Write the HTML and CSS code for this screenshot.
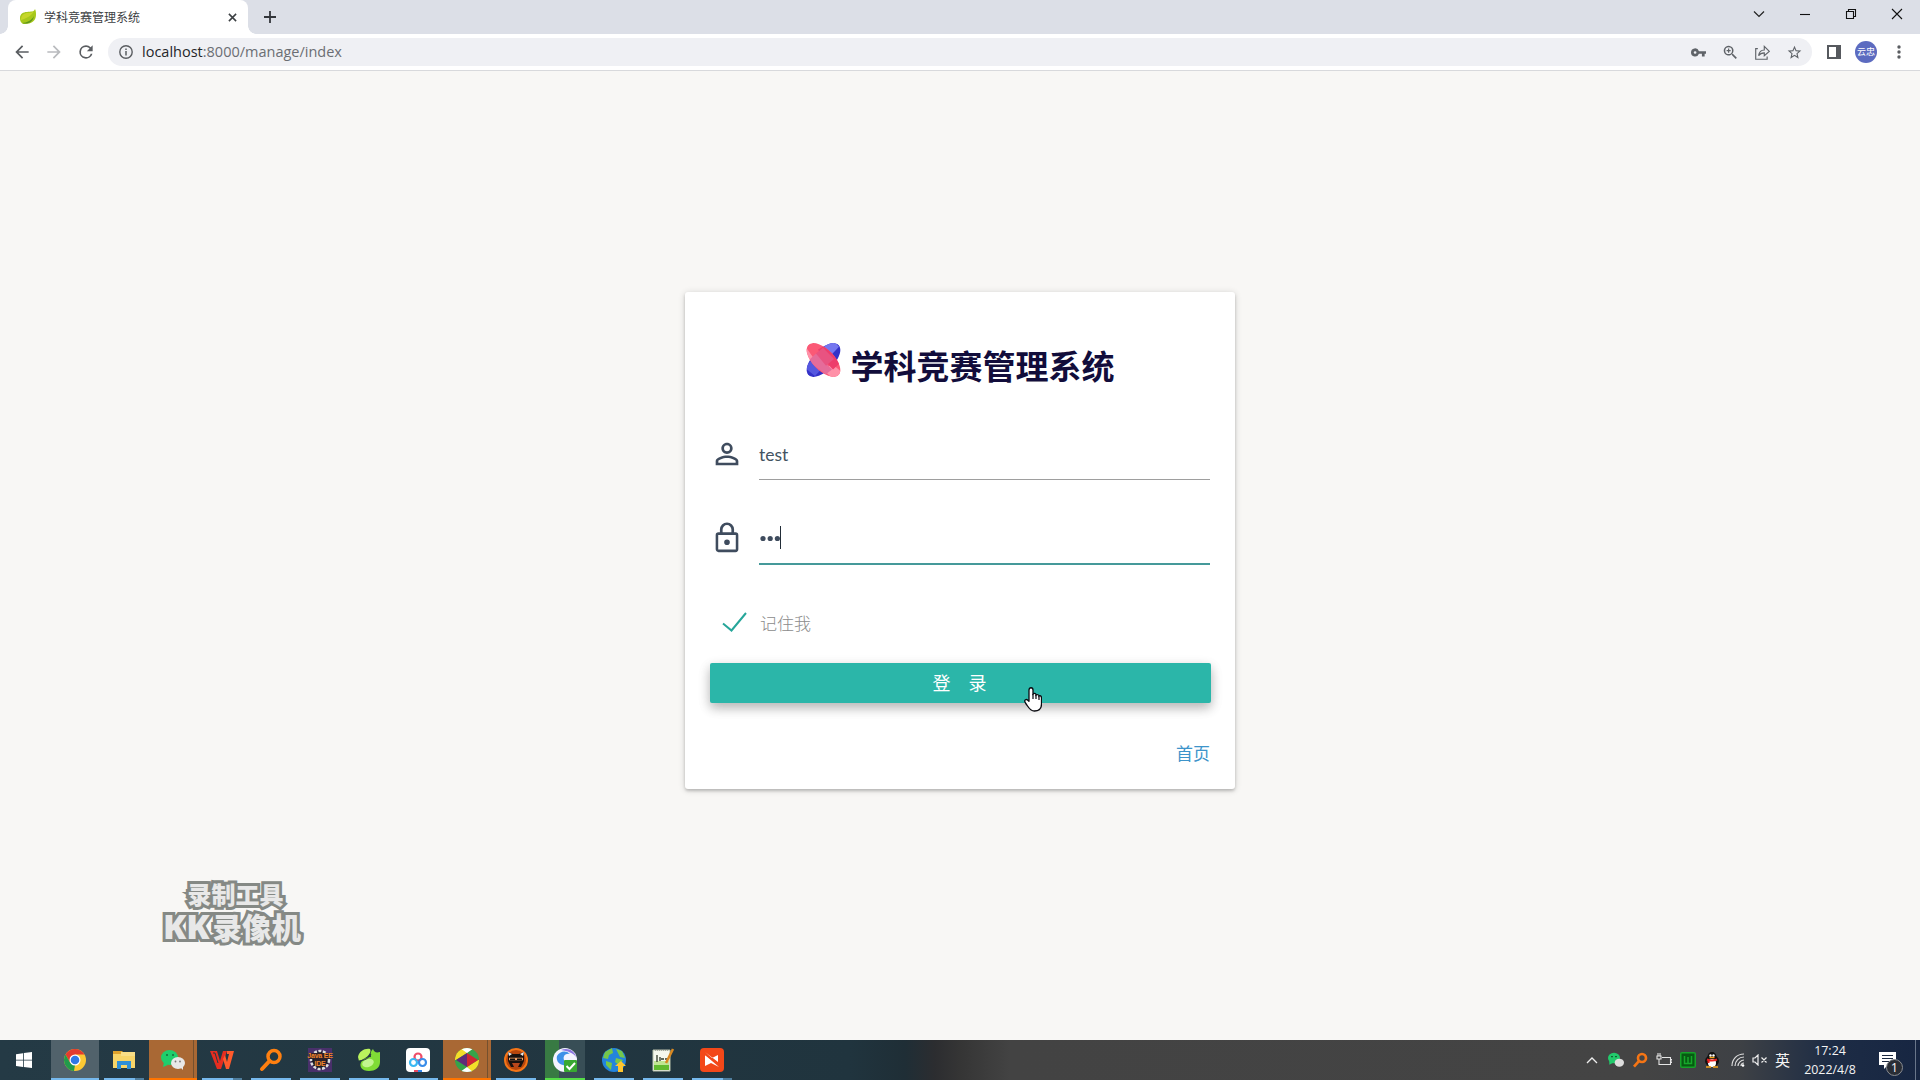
FILE: index.html
```html
<!DOCTYPE html>
<html lang="zh-CN">
<head>
<meta charset="utf-8">
<title>学科竞赛管理系统</title>
<link rel="stylesheet" href="styles.css">
</head>
<body>
<div class="desktop">
  <header class="tabstrip">
    <div class="tab">
      <svg class="favicon" viewBox="0 0 16 16"><path fill="#a7c81b" d="M15 0c-1 3-4 2.500-8 3C3 3 0 5 0 9c0 4 2 6 5 6 6 0 11-3 11-9 0-2 0-4-1-6z"/><path fill="#c6d62a" d="M14 2C12 6 8 9 1 11 1 6 4 4 8 4c3 0 5-1 6-2z"/><path fill="#5d951c" d="M2 14c5 0 10-3 12-7-1 6-6 9-12 7z"/></svg>
      <span class="tab-title">学科竞赛管理系统</span>
      <svg class="tab-close" viewBox="0 0 10 10"><path d="M1 1l8 8M9 1L1 9" stroke="#3c4043" stroke-width="1.7"/></svg>
    </div>
    <svg class="newtab" viewBox="0 0 12 12"><path d="M6 0v12M0 6h12" stroke="#33363b" stroke-width="1.8"/></svg>
    <div class="window-controls">
      <svg viewBox="0 0 12 12"><path d="M1 3.5l5 5 5-5" fill="none" stroke="#222" stroke-width="1.2"/></svg>
      <svg viewBox="0 0 12 12"><path d="M1 6.5h10" stroke="#111" stroke-width="1.1"/></svg>
      <svg viewBox="0 0 12 12"><path d="M1.5 3.5h7v7h-7zM3.5 3.5v-2h7v7h-2" fill="none" stroke="#111" stroke-width="1.1"/></svg>
      <svg viewBox="0 0 12 12"><path d="M1 1l10 10M11 1L1 11" stroke="#111" stroke-width="1.1"/></svg>
    </div>
  </header>
  <nav class="toolbar">
    <svg class="nav-icon" viewBox="0 0 24 24"><path fill="#5a5d61" d="M20 11H7.83l5.59-5.59L12 4l-8 8 8 8 1.41-1.41L7.83 13H20v-2z"/></svg>
    <svg class="nav-icon" viewBox="0 0 24 24"><path fill="#b9bbbe" d="M12 4l-1.41 1.41L16.17 11H4v2h12.17l-5.58 5.59L12 20l8-8z"/></svg>
    <svg class="nav-icon" viewBox="0 0 24 24"><path fill="#5a5d61" d="M17.65 6.35A7.96 7.96 0 0 0 12 4a8 8 0 1 0 7.73 10h-2.08A6 6 0 1 1 12 6c1.66 0 3.14.69 4.22 1.78L13 11h7V4l-2.35 2.35z"/></svg>
    <div class="address">
      <svg class="info" viewBox="0 0 14 14"><circle cx="7" cy="7" r="6.2" fill="none" stroke="#5a5d61" stroke-width="1.4"/><path d="M7 6v4.5M7 3.5V5" stroke="#5a5d61" stroke-width="1.5"/></svg>
      <span class="url"><b>localhost</b>:8000/manage/index</span>
      <div class="address-actions">
        <svg viewBox="1 1 22 22"><path fill="#5f6368" d="M12.650 10A5.990 5.990 0 0 0 1 12a6 6 0 0 0 11.650 2H17v4h4v-4h2v-4H12.650zM7 14a2 2 0 1 1 0-4 2 2 0 0 1 0 4z"/></svg>
        <svg viewBox="2 2 20 20"><path fill="#5f6368" d="M15.5 14h-.79l-.28-.27A6.5 6.5 0 1 0 13.73 14.43l.27.28v.79l5 5L20.5 19l-5-5zm-6 0a4.5 4.5 0 1 1 0-9 4.5 4.5 0 0 1 0 9zM10.3 6.8H8.7v1.9H6.800v1.6h1.900v1.900h1.600v-1.900h1.900V8.700h-1.900z"/></svg>
        <svg viewBox="2 2 21 21"><path d="M6 7H3v15h16v-4M7 17c1-6 4-8 8-8V4l7 7-7 6v-4c-4 0-6 1-8 4z" fill="none" stroke="#5f6368" stroke-width="1.600"/></svg>
        <svg viewBox="1 1 22 22"><path fill="#5f6368" d="M22 9.240l-7.190-.62L12 2 9.190 8.630 2 9.240l5.460 4.730L5.820 21 12 17.270 18.180 21l-1.630-7.030L22 9.240zM12 15.400l-3.760 2.270 1-4.280-3.320-2.880 4.380-.38L12 6.100l1.710 4.040 4.380.38-3.320 2.880 1 4.280L12 15.400z"/></svg>
      </div>
    </div>
    <svg class="panel" viewBox="0 0 14 14"><path fill="#56595e" fill-rule="evenodd" d="M0 0h14v14H0zM2 2v10h7V2z"/></svg>
    <span class="avatar">云忠</span>
    <svg class="dots" viewBox="0 0 4 14"><g fill="#5a5d61"><circle cx="2" cy="2" r="1.700"/><circle cx="2" cy="7" r="1.700"/><circle cx="2" cy="12" r="1.700"/></g></svg>
  </nav>

  <main class="page">
    <form class="card">
      <h1 class="brand">
        <svg class="logo" viewBox="0 0 35 36" preserveAspectRatio="none">
          <defs>
            <clipPath id="blue"><ellipse cx="17.500" cy="18" rx="22" ry="11" transform="rotate(-48 17.500 18)"/></clipPath>
            <clipPath id="red"><ellipse cx="17.500" cy="18" rx="22" ry="11" transform="rotate(48 17.500 18)"/></clipPath>
            <clipPath id="box"><rect width="35" height="36" rx="7"/></clipPath>
          </defs>
          <g clip-path="url(#box)">
          <g clip-path="url(#blue)"><path fill="#3432c8" d="M-5-5h45v45H-5z"/><path fill="#7577ef" d="M18 4l9-7 6 7-9 10-6 3z"/><path fill="#5557df" d="M0 24l6-6 9 10-6 7-8-7z"/></g>
          <g clip-path="url(#red)"><path fill="#fb5976" d="M-5-5h45v45H-5z"/><path fill="#ff91a8" d="M-2 8L1 6l6 9-5 6zM18 29l8-7 10 9-8 8z"/><path fill="#e56c9a" d="M2 19L10 11l16 17-6 5z"/><path fill="#ed3e6b" d="M12 7L20 2l15 18-8 8-9-10z"/><path fill="#e85381" d="M10 11l7-6 11 12-8 7z"/></g>
          </g>
        </svg>
        <span>学科竞赛管理系统</span>
      </h1>
      <div class="field">
        <svg class="field-icon" viewBox="0 0 24 24"><path fill="#3f4c5e" d="M12 5.900a2.100 2.100 0 1 1 0 4.200 2.100 2.100 0 0 1 0-4.200m0 9c2.970 0 6.100 1.460 6.100 2.100v1.100H5.900V17c0-.64 3.130-2.100 6.100-2.100M12 4C9.790 4 8 5.790 8 8s1.790 4 4 4 4-1.790 4-4-1.790-4-4-4zm0 9c-2.670 0-8 1.340-8 4v3h16v-3c0-2.660-5.330-4-8-4z"/></svg>
        <div class="input">test</div>
      </div>
      <div class="field">
        <svg class="field-icon" viewBox="0 0 24 24"><path fill="#3f4c5e" d="M12 17a2 2 0 1 0 0-4 2 2 0 0 0 0 4zm6-9h-1V6A5 5 0 0 0 7 6v2H6a2 2 0 0 0-2 2v10c0 1.100.9 2 2 2h12a2 2 0 0 0 2-2V10a2 2 0 0 0-2-2zM8.900 6a3.100 3.100 0 0 1 6.200 0v2H8.900V6zM18.200 20.200H5.800V9.800h12.400v10.400z"/></svg>
        <div class="input focused"><svg class="password" viewBox="0 0 24 24"><g fill="#3f4c5e"><circle cx="4" cy="12.500" r="2.600"/><circle cx="11.200" cy="12.500" r="2.600"/><circle cx="18.400" cy="12.500" r="2.600"/></g><path d="M21.500 0v23" stroke="#222d38"/></svg></div>
      </div>
      <label class="remember">
        <svg viewBox="0 0 25 20"><path d="M1 11.500l8.500 7L24 1" fill="none" stroke="#26a69a" stroke-width="2"/></svg>
        <span>记住我</span>
      </label>
      <div class="login"><span>登</span><span>录</span>
        <svg class="cursor" viewBox="0 0 18 25"><path d="M5 14V3c0-3 4-3 4 0v4c1-1 3-1 3 1 1-1 3 0 3 1 1-1 2.500 0 2.500 2v6c0 5-3 7-7 7-5 0-6-4-9-8-2-3 1-5 3-2z" fill="#fff" stroke="#08080e" stroke-width="1.300"/><path d="M9 7v5M12 8v4M15 9v4" stroke="#08080e" stroke-width="1.200"/></svg>
      </div>
      <a class="home">首页</a>
    </form>
    <div class="watermark"><span class="wm-top">录制工具</span><span class="wm-bottom"><span class="wm-kk">KK</span>录像机</span></div>
  </main>

  <footer class="taskbar">
    <div class="start"><svg viewBox="0 0 16 16"><path fill="#fff" d="M0 2.200l7-1v6.500H0zM7.800 1.100L16 0v7.700H7.800zM0 8.500h7V15l-7-1zM7.800 8.500H16V16l-8.200-1.100z"/></svg></div>
    <div class="apps">
      <div class="app active"><svg viewBox="0 0 24 24"><circle cx="12" cy="12" r="11" fill="#fcc934"/><path fill="#e33b2e" d="M2.500 6.500A11 11 0 0 1 21.500 6.500H12v5.500l-4.800 2.800z"/><path fill="#229a4b" d="M2.500 6.500l4.700 8.300L12 17l-1 6A11 11 0 0 1 2.500 6.500z"/><circle cx="12" cy="12" r="5.500" fill="#fff"/><circle cx="12" cy="12" r="4.300" fill="#2f78e6"/></svg></div>
      <div class="app stacked"><svg viewBox="0 0 24 24"><path fill="#e0a32d" d="M1 3h9l2 2v3H1z"/><path fill="#f8d568" d="M1 6h22v14H1z"/><path fill="#f9de86" d="M9 4h14v4H9z"/><path fill="#2f8fd7" d="M5 13h14v8h-4v-4H9v4H5z"/></svg></div>
      <div class="app alert"><svg viewBox="0 0 24 24"><ellipse cx="8.500" cy="9.500" rx="8.500" ry="7.500" fill="#1fce6c"/><path fill="#1fce6c" d="M3 14l-1 5 5-2z"/><g fill="#176b3c"><circle cx="6" cy="7" r="1"/><circle cx="12" cy="7" r="1"/></g><ellipse cx="17" cy="15" rx="7" ry="6" fill="#e8e8e8"/><path fill="#e8e8e8" d="M19 19l3 3v-5z"/><g fill="#777"><circle cx="14.500" cy="13.500" r=".9"/><circle cx="19" cy="13.500" r=".9"/></g></svg></div>
      <div class="app stacked"><svg viewBox="0 0 24 24"><path fill="#e52d20" d="M0 3h7l3 10 3-10h4l-6 18H7z"/><path fill="#ff5a2c" d="M13 11l3 10h3l5-18h-7v3h2l-2 8-2-7z"/><path d="M3 5h2l3 10" fill="none" stroke="#263944"/></svg></div>
      <div class="app"><svg viewBox="0 0 24 24"><circle cx="15" cy="8.500" r="6" fill="none" stroke="#ff8010" stroke-width="3.500"/><path d="M10.500 13L3 21" stroke="#ff8010" stroke-width="4" stroke-linecap="round"/></svg></div>
      <div class="app java-app">
        <svg viewBox="0 0 24 24"><path fill="#49306b" d="M0 0h24v24H0z"/><circle cx="12" cy="12" r="9" fill="#171925" stroke="#ddd" stroke-width="2.500" stroke-dasharray="3 1.500"/><path fill="#2c2028" d="M1 5h22v6H1zM6 11h12v7H6z"/></svg>
        <div class="java"><span>Java EE</span><span>IDE</span></div>
      </div>
      <div class="app"><svg viewBox="0 0 24 24"><path fill="#baf45d" d="M1 9C2 3 8 0 13 1c2 3-2 9-11 12z"/><path fill="#80dc36" d="M14 9c-1-4 0-6 2-8 1 3 3 4 7 3v10c0 6-5 9-11 9-7 0-11-5-7-10 3-3 6-4 9-4z"/><ellipse cx="11" cy="15" rx="6" ry="4" fill="#d8fcae" opacity=".75" transform="rotate(-20 11 15)"/><path d="M2 13c6-1 9-2 12-7" fill="none" stroke="#263944"/></svg></div>
      <div class="app"><svg viewBox="0 0 24 24"><rect width="24" height="24" rx="4" fill="#fff"/><g fill="none" stroke-width="2.200"><circle cx="12" cy="9" r="3.500" stroke="#ee4d68"/><circle cx="7.500" cy="14.500" r="3.500" stroke="#38b8f3"/><circle cx="16.500" cy="14.500" r="3.500" stroke="#388ce9"/></g><path fill="#e84a62" d="M8 22h4v2H8z"/><path fill="#3184e8" d="M12 22h4v2h-4z"/></svg></div>
      <div class="app alert"><svg viewBox="0 0 24 24"><clipPath id="wheel"><circle cx="12" cy="12" r="12"/></clipPath><g clip-path="url(#wheel)"><path fill="#35a34a" d="M0 0h24v24H0z"/><path fill="#f4dd29" d="M0 0h9l3 5L1 12H0zM12 19l11-7h1v8l-7 4z"/><path fill="#fff" d="M5 0h14l-7 5zM5 24l7-5 6 5z"/><path fill="#5f2c79" d="M1 12l11-7v14z"/><path fill="#cf2634" d="M12 5l11 7-11 7z"/></g></svg></div>
      <div class="app"><svg viewBox="0 0 24 24"><circle cx="12" cy="12" r="11" fill="#b6460d" stroke="#f57517" stroke-width="2"/><path fill="#17110f" d="M4 4l5 2h6l5-2v9l-3 6H7l-3-6z"/><path d="M5 11h14" stroke="#f3a267" stroke-width="2.500"/><path fill="#111" d="M6 10.500h5v1.500H6zM13 10.500h5v1.500h-5z"/><path fill="#b9471c" d="M8 15h8l-2 4h-4z"/><path fill="#eee" d="M4 4l4 2-3 2zM20 4l-4 2 3 2z"/></svg></div>
      <div class="app green"><svg viewBox="0 0 24 24"><circle cx="12" cy="12" r="12" fill="#f4f4ff"/><path fill="#3f91e8" d="M4 8c3-5 9-6 13-2-6-1-8 4-5 8 1 2 0 4-2 3C5 16 3 12 4 8z"/><path fill="#8a75df" d="M8 2c7-3 14 1 15 7-3-4-8-6-15-7z"/><rect x="11" y="12" width="13" height="12" rx="1" fill="#38a832"/><path d="M13.500 18l3 3 5.500-6" fill="none" stroke="#fff" stroke-width="2"/></svg></div>
      <div class="app"><svg viewBox="0 0 24 24"><circle cx="12" cy="12" r="12" fill="#2384dd"/><path fill="#75c74a" d="M3 4l7-4 1 5-4 2-1 4-5-1zM14 1l6 2 3 7-5-1-2-4zM4 13l6 2-1 7-5-5zM14 10l7 2-4 5-4-3z"/><path fill="#ffc52e" d="M19 13l5 5h-3v6h-5v-6h-3z"/></svg></div>
      <div class="app"><svg viewBox="0 0 24 24"><path fill="#f5f8ec" stroke="#b7c1aa" d="M2 2h17v21H2z"/><path fill="#62bb30" d="M3 17h15v5H3z"/><path fill="#c0e693" d="M3 13h15v4H3z"/><path d="M4 2h13" stroke="#777" stroke-dasharray="1 1"/><path d="M6 7v7M9 9v4M10 11h3M14 11h3" stroke="#2e3829" stroke-width="1.300"/><path d="M22 1l-7 14" stroke="#d98922" stroke-width="2.500"/></svg></div>
      <div class="app stacked"><svg viewBox="0 0 24 24"><rect width="24" height="24" rx="4" fill="#f34819"/><path fill="#fff" d="M5 4l13 10V7l-6 3zM5 7v11l6-3 8 4z"/><path d="M4 6l15 10" stroke="#f34819"/></svg></div>
    </div>
    <div class="tray">
      <svg class="t-up" viewBox="0 0 12 8"><path d="M1 7l5-5 5 5" fill="none" stroke="#eee" stroke-width="1.300"/></svg>
      <svg class="t16" viewBox="0 0 24 24"><ellipse cx="9" cy="9" rx="9" ry="8" fill="#22cb6c"/><path fill="#22cb6c" d="M2 13v6l6-3z"/><circle cx="6" cy="7" r="1"/><circle cx="12" cy="7" r="1"/><ellipse cx="17" cy="16" rx="7" ry="6" fill="#ddd"/></svg>
      <svg class="t16" viewBox="0 0 24 24"><circle cx="15" cy="9" r="6" fill="none" stroke="#f57515" stroke-width="4"/><path d="M10 14l-7 8" stroke="#f57515" stroke-width="4"/></svg>
      <svg class="t16" viewBox="0 0 16 14"><path d="M6 4.500h8.500v7H5M14.500 6.500H16v3h-1.500M1 3v3h4V3zM2 0v3M4 0v3M3 6v5.500h2" fill="none" stroke="#e5e5e5" stroke-width="1.100"/></svg>
      <svg class="t16" viewBox="0 0 16 16"><rect width="16" height="16" rx="2" fill="#16a329"/><rect x="1.500" y="1.500" width="13" height="13" fill="#075a12"/><path d="M4.500 4v7.500h7V4M8 5v6" fill="none" stroke="#17a82b" stroke-width="1.500"/></svg>
      <svg class="t16" viewBox="0 0 16 16"><ellipse cx="8" cy="9" rx="7" ry="6" fill="#111"/><ellipse cx="8" cy="5" rx="4.500" ry="5" fill="#111"/><ellipse cx="8" cy="11" rx="4" ry="4" fill="#fff"/><circle cx="6.500" cy="3.500" r="1.200" fill="#fff"/><circle cx="9.500" cy="3.500" r="1.200" fill="#fff"/><path d="M3 7.500q5 2 10 0M4.500 8v3" fill="none" stroke="#e82121" stroke-width="2"/><path d="M5.500 5.500h5M2 15h5M9 15h5" stroke="#f6a51b" stroke-width="1.600"/></svg>
      <svg class="t-wifi" viewBox="0 0 14 14"><path d="M1 13C1 6 6 1 13 1M4 13c0-5 4-9 9-9M7 13c0-3 3-6 6-6M10 13c0-2 1-3 3-3" fill="none" stroke="#ddd" stroke-width="1.200"/><circle cx="12" cy="12.500" r="1.300" fill="#fff"/></svg>
      <svg class="t-vol" viewBox="0 0 15 12"><path d="M1 4h2l3-3v10L3 8H1zM9.500 3.500l5 5M14.500 3.500l-5 5" fill="none" stroke="#eee" stroke-width="1.200"/></svg>
      <span class="ime">英</span>
      <div class="clock"><span>17:24</span><span>2022/4/8</span></div>
      <div class="notify"><svg viewBox="0 0 17 17"><path fill="#fff" d="M0 0h17v13H9l-4 4v-4H0z"/><path d="M3 3.500h11M3 6.500h11M3 9.500h7" stroke="#1b2941"/></svg><b>1</b></div>
    </div>
  </footer>
</div>
</body>
</html>
```
FILE: styles.css
```css
* { box-sizing: border-box; }
body { margin: 0; overflow: hidden; font-family: "Noto Sans", "Noto Sans CJK SC", sans-serif; }
svg { display: block; flex: none; }
.desktop { width: 1920px; height: 1080px; display: flex; flex-direction: column; background: #f8f7f5; }
.tabstrip { height: 34px; background: #dcdfe7; display: flex; padding-left: 8px; }
.tab { position: relative; width: 240px; height: 34px; border-radius: 8px 8px 0 0; background: #fff; display: flex; align-items: center; padding: 0 11px 0 12px; }
.tab::before, .tab::after { content: ""; position: absolute; bottom: 0; width: 8px; height: 8px; }
.tab::before { left: -8px; background: radial-gradient(circle at 0 0, transparent 7.5px, #fff 8px); }
.tab::after { right: -8px; background: radial-gradient(circle at 100% 0, transparent 7.5px, #fff 8px); }
.favicon { width: 16px; height: 16px; }
.tab-title { margin-left: 8px; font-size: 12px; color: #3c4043; line-height: 16px; flex: 1; padding-top: 1px; }
.tab-close { width: 9px; height: 9px; }
.newtab { width: 12px; height: 12px; margin: 11px 0 0 16px; }
.window-controls { margin: 8px 17px 0 auto; display: flex; gap: 34px; }
.window-controls svg { width: 12px; height: 12px; }
.toolbar { height: 37px; background: #fff; border-bottom: 1px solid #d8d9dc; display: flex; align-items: center; padding: 0 19px 0 12px; }
.nav-icon { width: 20px; height: 20px; margin-right: 12px; }
.address { flex: 1; height: 28px; border-radius: 14px; background: #eff0f4; display: flex; align-items: center; padding: 0 10px 0 11px; }
.info { width: 14px; height: 14px; }
.url { margin: -2px 0 0 9px; font-family: "Open Sans", "Noto Sans", sans-serif; font-size: 14.5px; color: #6b6e73; }
.url b { color: #242629; font-weight: 400; }
.address-actions { display: flex; gap: 17px; margin-left: auto; }
.address-actions svg { width: 15px; height: 15px; }
.panel { width: 14px; height: 14px; margin-left: 15px; }
.avatar { width: 22px; height: 22px; border-radius: 50%; background: #5c6bc0; color: #fff; font-size: 9px; line-height: 22px; text-align: center; margin-left: 14px; }
.dots { width: 4px; height: 14px; margin-left: 20px; }

.page { position: relative; flex: 1; padding-top: 221px; }
.card { width: 550px; height: 497px; margin: 0 auto; background: #fff; border-radius: 3px; padding: 43px 24px 0 25px; box-shadow: 0 2px 3px rgba(0,0,0,.18), 0 1px 7px rgba(0,0,0,.16); }
.brand { height: 64px; margin: 0; display: flex; justify-content: center; color: #120d3b; font-size: 33px; line-height: 63px; font-weight: 700; }
.logo { width: 35px; height: 34px; margin: 8px 10px 0 -1px; }
.field { height: 84px; display: flex; padding-right: 1px; }
.field-icon { width: 34px; height: 34px; margin: 38px 15.5px 0 -.5px; }
.input { flex: 1; height: 81px; border-bottom: 1px solid #9e9e9e; font: 17.5px/112px "Lato", sans-serif; color: #435361; }
.input.focused { height: 82px; border-bottom: 2px solid #45999a; }
.password { width: 24px; height: 24px; margin-top: 43px; }
.remember { height: 96px; display: flex; padding: 45px 0 0 12px; font-size: 17px; line-height: 23px; color: #8c8c8c; font-weight: 300; }
.remember svg { width: 25px; height: 20px; }
.remember span { margin: 0 0 0 13px; }
.login { position: relative; height: 40px; border-radius: 2px; background: #2bb6a9; color: #fff; font-size: 18px; line-height: 40px; display: flex; justify-content: center; gap: 18px; padding-right: 2px; box-shadow: 0 5px 11px rgba(0,0,0,.22), 0 4px 14px rgba(0,0,0,.1); }
.cursor { position: absolute; left: 314px; top: 24px; width: 18px; height: 25px; }
.home { display: block; padding-right: 1px; margin-top: 36px; text-align: right; font-size: 17px; line-height: 30px; color: #3d94ca; }
.watermark { position: absolute; left: 160px; top: 807px; width: 144px; display: flex; flex-direction: column; align-items: center; color: #e8e8e8; font-weight: 900; -webkit-text-stroke: 6px #858985; paint-order: stroke fill; }
.wm-top { font-size: 24px; line-height: 33px; margin-left: 7px; }
.wm-bottom { font-size: 29.5px; line-height: 33px; white-space: nowrap; }
.wm-kk { font-size: 34px; line-height: 30px; margin-right: 3px; }

.taskbar { height: 40px; display: flex; background: linear-gradient(90deg, #243a45 0, #20343e 850px, #1f2e36 905px, #2c2d30 935px, #353535 960px, #434343 1010px, #444 1640px, #3e4145 1740px, #1d2c45 1830px, #172642 100%); }
.start { width: 51px; display: flex; align-items: center; padding-left: 16px; }
.start svg { width: 16px; height: 16px; }
.apps { display: flex; }
.app { position: relative; width: 48px; height: 40px; margin-right: 1px; display: grid; place-items: center; }
.app svg { width: 24px; height: 24px; }
.app::after { content: ""; position: absolute; left: 4px; right: 4px; bottom: 0; height: 2px; background: #76b9ed; }
.app.stacked::after { background: linear-gradient(90deg, #76b9ed 78%, #4f7e9e 78%); }
.app.active { background: #51626b; }
.app.active::after { left: 0; right: 0; }
.app.alert { background: linear-gradient(90deg, #a96834 44px, #75502e 44px, #75502e 45px, #a96834 45px); }
.app.alert::after { left: 0; right: 0; background: #ff7400; }
.app.green { background: linear-gradient(90deg, transparent 4px, #387a43 4px, #387a43 18px, #384e56 18px, #384e56 44px, transparent 44px); }
.app.green::after { background: #55dd48; }
.java { position: absolute; left: 8px; right: 8px; top: 12px; display: flex; flex-direction: column; align-items: center; font: 700 7px/8px "Liberation Sans", sans-serif; letter-spacing: -.2px; color: #ef852b; white-space: nowrap; }
.tray { margin-left: auto; display: flex; align-items: center; color: #f4f4f4; padding-right: 4px; }
.t-up { width: 12px; height: 8px; margin-right: 10px; }
.t16 { width: 16px; height: 16px; margin-right: 8px; }
.t-wifi { width: 14px; height: 14px; margin: 0 7px 0 3px; }
.t-vol { width: 15px; height: 12px; margin-right: 8px; }
.ime { font-size: 15px; line-height: 20px; }
.clock { width: 54px; margin-left: 13px; display: flex; flex-direction: column; align-items: center; font: 12.4px/19px "Open Sans", sans-serif; }
.notify { position: relative; width: 59px; height: 40px; padding: 12px 0 0 22px; border-right: 1px solid #69768a; }
.notify svg { width: 17px; height: 17px; }
.notify b { position: absolute; left: 29px; top: 19px; width: 17px; height: 17px; border: 1px solid #8a8d92; border-radius: 50%; background: #292d35; font-size: 12px; font-weight: 400; line-height: 15px; text-align: center; }
```
